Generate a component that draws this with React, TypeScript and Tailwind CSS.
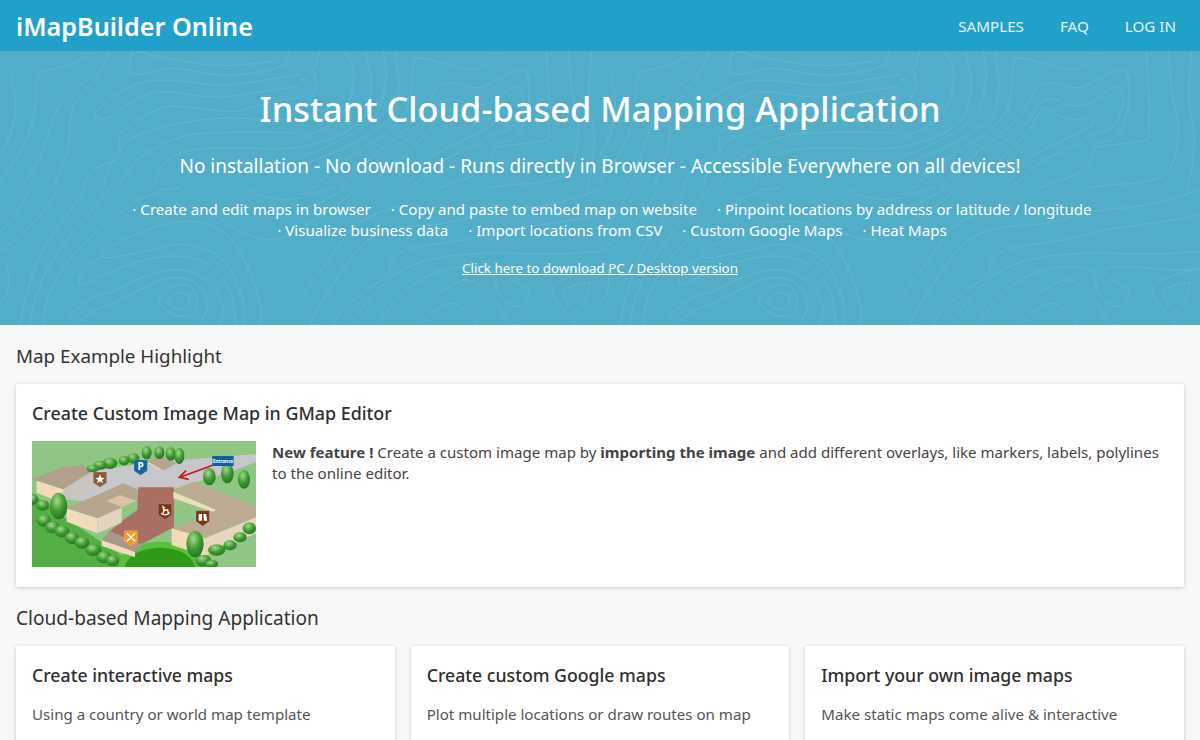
const ROW_ONE = ['Create and edit maps in browser', 'Copy and paste to embed map on website', 'Pinpoint locations by address or latitude / longitude']
const ROW_TWO = ['Visualize business data', 'Import locations from CSV', 'Custom Google Maps', 'Heat Maps']

const APPS = [
  { title: 'Create interactive maps', text: 'Using a country or world map template' },
  { title: 'Create custom Google maps', text: 'Plot multiple locations or draw routes on map' },
  { title: 'Import your own image maps', text: 'Make static maps come alive & interactive' },
]

// contour lines, traced per quadrant of the 600px tile at 3x
const TOPO = [
  {
    at: 'translate(0,0) scale(0.3333)',
    lines: [
      'M395 0C390 30 385 60 395 70C430 75 480 50 530 52C590 60 640 75 700 72C760 70 830 55 855 40L870 0',
      'M420 0C450 15 520 25 600 38C680 50 760 40 820 30',
      'M290 195C280 185 285 190 300 170C340 130 400 95 460 88C520 85 590 95 650 103C720 105 800 85 900 70',
      'M285 195C300 210 330 205 350 185C390 150 440 120 500 122C570 130 620 140 680 138C740 130 820 115 900 105',
      'M250 411L260 380C280 340 320 345 358 320C365 300 355 270 360 245C420 205 470 165 520 165C580 170 640 180 710 182C760 170 800 150 900 140',
      'M60 411L85 380C130 320 140 260 160 200C175 160 210 130 260 85',
      'M0 390C40 340 80 280 95 220C115 160 100 90 120 65C170 50 230 40 280 0',
      'M0 310C20 280 35 250 45 190C55 130 30 100 35 60',
      'M160 411C170 380 190 340 205 290C215 240 200 190 230 150C270 110 310 60 330 0',
      'M310 411C325 340 350 290 400 260C450 230 540 215 620 205C700 195 800 210 900 205',
      'M350 411C360 400 370 380 400 340C430 310 480 270 580 250C680 240 800 245 900 245',
      'M460 411C480 340 500 315 560 300C650 280 780 300 900 290',
    ],
  },
  {
    at: 'translate(0,137) scale(0.3333)',
    lines: [
      'M500 340C515 315 550 305 565 320C575 340 565 365 540 365C520 360 505 355 500 340Z',
      'M475 340C490 305 530 285 565 290C590 305 600 350 580 375C550 400 500 380 475 340Z',
      'M230 411C260 370 310 355 345 345C380 320 430 300 490 275C540 260 580 270 610 310C630 350 620 390 590 411',
      'M205 390C240 340 300 320 340 310C430 260 500 240 540 245C610 250 670 320 670 370L660 411',
      'M305 205C320 170 400 140 470 115C530 95 590 95 640 115C720 150 750 250 775 330C790 370 785 390 780 411',
      'M305 205C330 220 420 190 520 170C600 165 660 190 700 260L730 340L735 411',
      'M240 290C225 275 260 225 310 205M240 290C270 285 340 240 440 215C520 195 600 200 650 250C690 290 705 340 705 411',
      'M130 411C130 330 170 270 190 240C230 180 300 120 380 60C420 30 480 0 540 0',
      'M90 411C100 330 130 250 190 170C230 120 270 70 330 0',
      'M60 411C70 340 100 240 130 180C170 120 210 70 260 0',
      'M0 190C30 170 90 120 130 70L180 0',
      'M0 130C40 100 60 60 90 0',
      'M0 215C25 225 35 270 20 320L0 345',
      'M620 60C680 110 760 170 840 150C870 140 890 130 900 120',
      'M740 0C780 30 840 40 900 30',
    ],
  },
  {
    at: 'translate(300,0) scale(0.3333)',
    lines: [
      'M0 90C20 80 45 60 50 30C55 10 60 0 60 0M45 60C40 90 60 100 45 120C30 150 0 170 0 170',
      'M130 0C170 40 170 110 140 170C110 220 60 240 0 265',
      'M195 0C215 60 225 130 190 200C150 250 80 270 0 290',
      'M250 0C265 60 260 130 230 190C190 240 100 280 0 320',
      'M285 0C300 80 300 150 280 190C230 250 120 300 0 345',
      'M40 411C80 370 130 330 190 290C230 270 290 230 320 180C340 130 335 80 340 30C350 15 380 20 420 35C470 45 500 60 530 55C570 40 590 0 600 0',
      'M120 411C170 350 240 300 300 250C350 210 385 170 405 115C430 85 460 95 520 110C570 115 620 60 670 55C690 60 695 120 680 190C660 260 640 270 600 275',
      'M330 411C340 400 360 390 400 350C450 310 500 300 540 275C570 250 590 245 620 240C650 230 660 195 670 150C670 120 650 95 625 115C590 150 540 175 500 160C460 135 420 135 400 190C380 220 330 260 280 300',
      'M310 411C340 370 380 320 420 300C480 270 540 245 575 225C585 210 570 195 540 205C490 210 460 180 430 170C410 190 400 230 350 280C320 310 280 350 230 380L200 411',
      'M585 290C640 275 700 280 745 265L750 170C745 100 740 50 740 0',
      'M560 411C640 395 730 405 790 375C830 340 835 280 835 210C820 170 810 80 805 0',
      'M860 411C880 350 890 270 875 200C860 150 870 80 875 0',
      'M420 411C500 380 570 370 585 290',
    ],
  },
  {
    at: 'translate(300,137) scale(0.3333)',
    lines: [
      'M620 240C650 230 740 240 810 245C860 250 900 240 900 240',
      'M230 411C280 340 340 280 400 255C480 230 560 230 580 250C590 320 610 350 650 355C680 350 700 320 680 300C640 280 610 260 620 240',
      'M340 390C390 340 450 280 500 275C540 280 570 320 590 340C600 370 620 400 640 411',
      'M790 305C800 300 860 280 870 285C870 320 850 350 825 372C810 360 785 330 790 305Z',
      'M830 411L820 390C790 370 750 320 760 290C790 270 860 245 900 245',
      'M100 411C130 340 210 300 270 260C265 220 280 190 360 175C440 165 530 150 620 125C720 110 820 100 900 80',
      'M30 411C60 340 130 240 170 190C220 130 280 115 400 110C470 110 560 60 680 60C760 50 830 30 900 5',
      'M0 340C30 280 90 220 130 150C170 100 240 60 340 50',
      'M150 411C200 340 260 260 340 230C420 200 520 195 620 195C720 200 800 200 900 190',
      'M360 411C400 370 430 345 455 345C490 355 520 390 535 411',
      'M0 70C40 50 100 30 130 0',
      'M0 120C60 90 120 50 170 0',
      'M0 20C40 15 80 5 100 0',
    ],
  },
]

const TREES = [
  [340, 85, 18, 16], [312, 92, 16, 14], [270, 100, 22, 17], [240, 106, 20, 13], [218, 116, 18, 11],
  [380, 68, 15, 20], [418, 68, 15, 19], [452, 72, 15, 20], [478, 78, 15, 24],
  [568, 140, 19, 26], [622, 130, 19, 30], [672, 148, 18, 28],
  [40, 208, 14, 16], [68, 226, 20, 16], [72, 272, 22, 18], [98, 292, 22, 18], [126, 304, 22, 18], [156, 324, 22, 18],
  [186, 338, 22, 18], [220, 360, 24, 18], [252, 382, 22, 18], [278, 392, 20, 16],
  [688, 295, 20, 18], [660, 322, 20, 15], [630, 346, 20, 15], [590, 360, 26, 17], [550, 392, 24, 18], [575, 402, 20, 12],
  [116, 228, 26, 40], [525, 342, 26, 40],
]

function Contours() {
  return (
    <svg className="absolute inset-0 h-full w-full" aria-hidden="true">
      <defs>
        <pattern id="topo" width="600" height="274" patternUnits="userSpaceOnUse">
          {TOPO.map((q) => (
            <g key={q.at} transform={q.at} fill="none" stroke="#ffffff" strokeOpacity="0.1" strokeWidth="3">
              {q.lines.map((d) => (
                <path key={d} d={d} />
              ))}
            </g>
          ))}
        </pattern>
      </defs>
      <rect width="100%" height="100%" fill="url(#topo)" />
    </svg>
  )
}

function Shield({ x, y, fill, children }: { x: number; y: number; fill: string; children: React.ReactNode }) {
  return (
    <g transform={`translate(${x},${y})`}>
      <path d="M-20 -20H20V12L0 26L-20 12Z" fill={fill} stroke="#ffffff" strokeOpacity="0.4" strokeWidth="1" />
      {children}
    </g>
  )
}

function MapThumb() {
  return (
    <svg viewBox="0 0 672 378" className="h-[126px] w-[224px] shrink-0">
      <defs>
        <radialGradient id="leaf" cx="0.4" cy="0.3" r="0.8">
          <stop offset="0" stopColor="#a5d98a" />
          <stop offset="0.5" stopColor="#3f9a33" />
          <stop offset="1" stopColor="#1c6a1c" />
        </radialGradient>
      </defs>
      <g transform="translate(-36,-33)">
        <rect x="36" y="33" width="672" height="378" fill="#8fc684" />
        <path d="M36 190L130 260L250 340L340 400L300 411H36Z" fill="#3fa52e" opacity="0.75" />
        <ellipse cx="420" cy="405" rx="125" ry="70" fill="#58c03c" />
        <ellipse cx="420" cy="415" rx="105" ry="62" fill="#2f9a1a" />
        {/* road */}
        <path d="M130 160L225 122L385 98L708 72V96L640 122L460 178H355L250 218L150 210Z" fill="#c6c7ca" />
        {/* brick yard */}
        <path d="M355 172H462V292L370 340L345 345L262 310L310 270L352 240Z" fill="#a96f63" />
        {/* left hall */}
        <path d="M50 150L130 178V220L50 188Z" fill="#f0dcb9" />
        <path d="M36 148L130 110L190 105L215 125L130 178Z" fill="#b3a08c" />
        <path d="M130 178L215 125L240 170L130 215Z" fill="#c8c5c0" />
        {/* centre block */}
        <path d="M140 235L232 265V310L140 275Z" fill="#f0dcb9" />
        <path d="M232 265L305 232V278L232 310Z" fill="#e2d3c1" />
        <path d="M260 213L300 195L350 212L305 232Z" fill="#d8c3a5" />
        <path d="M140 235L310 160L352 178V212L300 195L260 213L305 232L234 264Z" fill="#b7a68f" />
        {/* right block */}
        <path d="M460 185L590 240V250L460 205Z" fill="#f0dcb9" />
        <path d="M455 295L555 325V378L455 345Z" fill="#f0dcb9" />
        <path d="M555 325L708 262V310L555 378Z" fill="#e6d6c2" />
        <path d="M460 180L520 155L708 230V260L555 322L455 295L590 240Z" fill="#bcaa92" />
        {/* small blocks */}
        <path d="M245 330L345 365V382L245 348Z" fill="#f0dcb9" />
        <path d="M245 330L270 303L370 345L345 365Z" fill="#a8988a" />
        <path d="M385 100L430 125V105L400 90Z" fill="#f0dcb9" />
        <path d="M385 95L425 80L470 100L430 122Z" fill="#b7a68f" />
        {TREES.map(([cx, cy, rx, ry]) => (
          <ellipse key={`${cx}-${cy}`} cx={cx} cy={cy} rx={rx} ry={ry} fill="url(#leaf)" />
        ))}
        {/* entrance sign + arrow */}
        <path d="M578 106L484 140" stroke="#c8141c" strokeWidth="5" />
        <path d="M498 122L478 142L506 148" fill="none" stroke="#c8141c" strokeWidth="5" />
        <rect x="577" y="78" width="64" height="30" fill="#0f619b" />
        <text x="609" y="98" textAnchor="middle" fontSize="14" fontWeight="700" fill="#ffffff">Entrance</text>
        <Shield x={362} y={110} fill="#14659f">
          <text y="10" textAnchor="middle" fontSize="30" fontWeight="700" fill="#ffffff">P</text>
        </Shield>
        <Shield x={240} y={146} fill="#8b5b3c">
          <path d="M0 -13L4 -3L14 -2L6 4L9 14L0 8L-9 14L-6 4L-14 -2L-4 -3Z" fill="#ffffff" />
        </Shield>
        <Shield x={435} y={242} fill="#7c3517">
          <path d="M-12 8C-4 14 8 14 14 6M-6 8L-2 -2H8L10 8M-4 -2L-6 -12L0 -8" fill="none" stroke="#ffffff" strokeWidth="4" />
        </Shield>
        <Shield x={548} y={262} fill="#7c3517">
          <path d="M-12 -10H-2V10H-12ZM2 -10L10 -10L14 10H4Z" fill="#ffffff" />
        </Shield>
        <Shield x={333} y={322} fill="#f59b25">
          <path d="M-12 -12L12 12M12 -12L-12 12" stroke="#ffffff" strokeWidth="4" />
        </Shield>
      </g>
    </svg>
  )
}

function Features({ items }: { items: string[] }) {
  return (
    <div className="flex justify-center gap-5 pl-6">
      {items.map((f) => (
        <span key={f}>· {f}</span>
      ))}
    </div>
  )
}

export default function App() {
  return (
    <div className="h-[740px] overflow-hidden bg-[#f8f8f8] font-['Noto_Sans',sans-serif] text-[#333]">
      <nav className="flex h-[51px] items-center justify-between bg-[#21a1c9] pl-4 pr-6 pt-[2px] text-white">
        <a className="text-[25.2px] font-semibold">iMapBuilder Online</a>
        <div className="flex gap-9 text-[15.2px] text-[#e3f3f8]">
          <a>SAMPLES</a>
          <a>FAQ</a>
          <a>LOG IN</a>
        </div>
      </nav>

      <header className="relative h-[274px] bg-[#52adc9] text-center text-white">
        <Contours />
        <div className="relative pt-[32px]">
          <h1 className="text-[34.4px] font-medium leading-[52px]">Instant Cloud-based Mapping Application</h1>
          <p className="mt-[16px] text-[19px] leading-[30px]">
            No installation - No download - Runs directly in Browser - Accessible Everywhere on all devices!
          </p>
          <div className="mt-[18px] text-[15.1px] leading-[21px]">
            <Features items={ROW_ONE} />
            <Features items={ROW_TWO} />
          </div>
          <a className="mt-[17px] block text-[13.35px] leading-[21px] underline">Click here to download PC / Desktop version</a>
        </div>
      </header>

      <main className="px-4">
        <h2 className="pt-[17px] text-[18.8px] leading-[28px]">Map Example Highlight</h2>
        <section className="mt-[14px] h-[203px] rounded-[2px] bg-white px-4 pt-[16px] shadow-[0_1px_4px_rgba(0,0,0,0.2)]">
          <h3 className="text-[17.85px] font-medium leading-[26px] text-[#2f2f2f]">Create Custom Image Map in GMap Editor</h3>
          <div className="mt-[15px] flex gap-4">
            <MapThumb />
            <p className="pt-px text-[15.05px] leading-[21px] text-[#444]">
              <b className="font-bold">New feature !</b> Create a custom image map by <b className="font-bold">importing the image</b> and add different overlays, like markers, labels, polylines to the online editor.
            </p>
          </div>
        </section>

        <h2 className="mt-[17px] text-[19.1px] leading-[28px]">Cloud-based Mapping Application</h2>
        <div className="mt-[14px] grid grid-cols-3 gap-4">
          {APPS.map((a) => (
            <div key={a.title} className="h-[160px] rounded-[2px] bg-white px-4 pt-[16px] shadow-[0_1px_4px_rgba(0,0,0,0.2)]">
              <h3 className="text-[17.7px] font-medium leading-[26px] text-[#2f2f2f]">{a.title}</h3>
              <p className="mt-[16px] text-[15.1px] leading-[21px] text-[#555]">{a.text}</p>
            </div>
          ))}
        </div>
      </main>
    </div>
  )
}
